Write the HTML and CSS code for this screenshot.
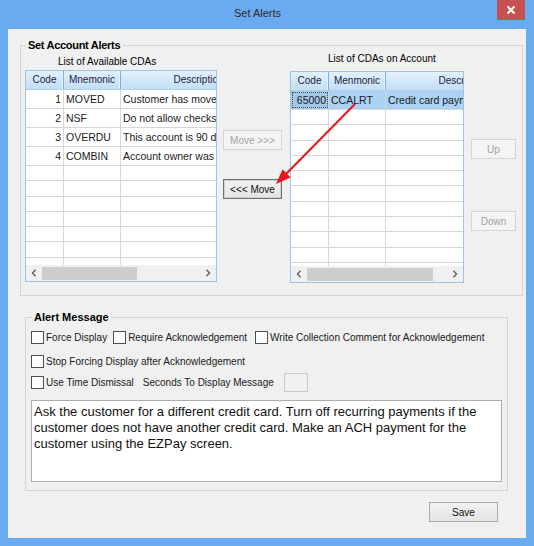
FILE: index.html
```html
<!DOCTYPE html>
<html>
<head>
<meta charset="utf-8">
<link rel="stylesheet" href="styles.css">
</head>
<body>
<div class="window">
  <div class="titlebar">
    <span class="title">Set Alerts</span>
    <span class="close"><svg width="10" height="10" viewBox="0 0 10 10"><path d="M1.5 1.5 L8.5 8.5 M8.5 1.5 L1.5 8.5" stroke="#fff" stroke-width="2" fill="none"/></svg></span>
  </div>
  <div class="client">
    <fieldset class="group group-accounts">
      <legend>Set Account Alerts</legend>
      <div class="accounts">
        <div class="list list-available">
          <div class="list-label">List of Available CDAs</div>
          <div class="grid">
            <div class="grid-head">
              <div class="hc c-code">Code</div><div class="hc c-mn">Mnemonic</div><div class="hc c-desc">Description</div>
            </div>
            <div class="grid-body">
              <div class="row"><div class="cell c-code num">1</div><div class="cell c-mn">MOVED</div><div class="cell c-desc">Customer has moved</div></div>
              <div class="row"><div class="cell c-code num">2</div><div class="cell c-mn">NSF</div><div class="cell c-desc">Do not allow checks</div></div>
              <div class="row"><div class="cell c-code num">3</div><div class="cell c-mn">OVERDU</div><div class="cell c-desc">This account is 90 days</div></div>
              <div class="row"><div class="cell c-code num">4</div><div class="cell c-mn">COMBIN</div><div class="cell c-desc">Account owner was</div></div>
              <div class="row filler"><div class="cell c-code"></div><div class="cell c-mn"></div><div class="cell c-desc"></div></div>
              <div class="row filler"><div class="cell c-code"></div><div class="cell c-mn"></div><div class="cell c-desc"></div></div>
              <div class="row filler"><div class="cell c-code"></div><div class="cell c-mn"></div><div class="cell c-desc"></div></div>
              <div class="row filler"><div class="cell c-code"></div><div class="cell c-mn"></div><div class="cell c-desc"></div></div>
              <div class="row filler"><div class="cell c-code"></div><div class="cell c-mn"></div><div class="cell c-desc"></div></div>
              <div class="row filler"><div class="cell c-code"></div><div class="cell c-mn"></div><div class="cell c-desc"></div></div>
              <div class="row filler"><div class="cell c-code"></div><div class="cell c-mn"></div><div class="cell c-desc"></div></div>
            </div>
            <div class="hscroll">
              <span class="arr"><svg width="6" height="8" viewBox="0 0 6 8"><path d="M4.5 0.8 L1.5 4 L4.5 7.2" stroke="#606060" stroke-width="1.4" fill="none"/></svg></span>
              <span class="track"><span class="thumb thumb-left"></span></span>
              <span class="arr"><svg width="6" height="8" viewBox="0 0 6 8"><path d="M1.5 0.8 L4.5 4 L1.5 7.2" stroke="#606060" stroke-width="1.4" fill="none"/></svg></span>
            </div>
          </div>
        </div>

        <div class="move-buttons">
          <div class="btn disabled btn-move-right">Move &gt;&gt;&gt;</div>
          <div class="btn default btn-move-left">&lt;&lt;&lt; Move</div>
        </div>

        <div class="list list-account">
          <div class="list-label">List of CDAs on Account</div>
          <div class="grid">
            <div class="grid-head">
              <div class="hc c-code">Code</div><div class="hc c-mn">Menmonic</div><div class="hc c-desc">Description</div>
            </div>
            <div class="grid-body">
              <div class="row selected"><div class="cell c-code num focus">65000</div><div class="cell c-mn">CCALRT</div><div class="cell c-desc">Credit card payment</div></div>
              <div class="row filler"><div class="cell c-code"></div><div class="cell c-mn"></div><div class="cell c-desc"></div></div>
              <div class="row filler"><div class="cell c-code"></div><div class="cell c-mn"></div><div class="cell c-desc"></div></div>
              <div class="row filler"><div class="cell c-code"></div><div class="cell c-mn"></div><div class="cell c-desc"></div></div>
              <div class="row filler"><div class="cell c-code"></div><div class="cell c-mn"></div><div class="cell c-desc"></div></div>
              <div class="row filler"><div class="cell c-code"></div><div class="cell c-mn"></div><div class="cell c-desc"></div></div>
              <div class="row filler"><div class="cell c-code"></div><div class="cell c-mn"></div><div class="cell c-desc"></div></div>
              <div class="row filler"><div class="cell c-code"></div><div class="cell c-mn"></div><div class="cell c-desc"></div></div>
              <div class="row filler"><div class="cell c-code"></div><div class="cell c-mn"></div><div class="cell c-desc"></div></div>
              <div class="row filler"><div class="cell c-code"></div><div class="cell c-mn"></div><div class="cell c-desc"></div></div>
              <div class="row filler"><div class="cell c-code"></div><div class="cell c-mn"></div><div class="cell c-desc"></div></div>
              <div class="row filler"><div class="cell c-code"></div><div class="cell c-mn"></div><div class="cell c-desc"></div></div>
            </div>
            <div class="hscroll">
              <span class="arr"><svg width="6" height="8" viewBox="0 0 6 8"><path d="M4.5 0.8 L1.5 4 L4.5 7.2" stroke="#606060" stroke-width="1.4" fill="none"/></svg></span>
              <span class="track"><span class="thumb thumb-right"></span></span>
              <span class="arr"><svg width="6" height="8" viewBox="0 0 6 8"><path d="M1.5 0.8 L4.5 4 L1.5 7.2" stroke="#606060" stroke-width="1.4" fill="none"/></svg></span>
            </div>
          </div>
        </div>

        <div class="order-buttons">
          <div class="btn disabled btn-up">Up</div>
          <div class="btn disabled btn-down">Down</div>
        </div>
      </div>
    </fieldset>

    <fieldset class="group group-message">
      <legend>Alert Message</legend>
      <div class="opt-row row1">
        <span class="check"><span class="box"></span>Force Display</span>
        <span class="check"><span class="box"></span>Require Acknowledgement</span>
        <span class="check"><span class="box"></span>Write Collection Comment for Acknowledgement</span>
      </div>
      <div class="opt-row row2">
        <span class="check"><span class="box"></span>Stop Forcing Display after Acknowledgement</span>
      </div>
      <div class="opt-row row3">
        <span class="check"><span class="box"></span>Use Time Dismissal</span>
        <span class="seconds-label">Seconds To Display Message</span>
        <span class="seconds-input"></span>
      </div>
      <div class="message">Ask the customer for a different credit card. Turn off recurring payments if the customer does not have another credit card. Make an ACH payment for the customer using the EZPay screen.</div>
    </fieldset>

    <div class="footer">
      <div class="btn btn-save">Save</div>
    </div>
  </div>

  <svg class="annotation" width="534" height="546" viewBox="0 0 534 546">
    <line x1="355" y1="104" x2="286" y2="174" stroke="#e8161b" stroke-width="2"/>
    <polygon points="276,184 290.6,177.4 282.6,169.2" fill="#e8161b"/>
  </svg>
</div>
</body>
</html>
```

FILE: styles.css
```css
* { box-sizing: border-box; }

body {
  margin: 0;
  background: #ffffff;
}

.window {
  position: relative;
  width: 534px;
  height: 546px;
  background: #6aaaf0;
  display: flex;
  flex-direction: column;
  font-family: "Liberation Sans", Arial, sans-serif;
  font-size: 10px;
  color: #000;
}

.titlebar {
  height: 29px;
  flex: none;
  display: flex;
  align-items: flex-start;
}

.title {
  flex: 1;
  text-align: center;
  padding-left: 18px;
  line-height: 27px;
  font-size: 11px;
  color: #2b2b2b;
}

.close {
  width: 28px;
  height: 20px;
  margin-right: 9px;
  background: #c75050;
  display: flex;
  align-items: center;
  justify-content: center;
}

.client {
  flex: 1;
  margin: 0 8px 8px;
  background: #f0f0f0;
  display: flex;
  flex-direction: column;
}

.group {
  min-width: 0;
  border: 1px solid #d5d5d5;
}

.group legend {
  font-weight: bold;
  font-size: 11px;
  line-height: 14px;
  padding: 0 2px;
  margin-left: 1px;
}

.group-accounts {
  margin: 9px 3px 0 12px;
  padding: 0 0 12px 4px;
}

.group-accounts legend { letter-spacing: -0.3px; }

.accounts {
  display: flex;
  align-items: flex-start;
}

.list-available { width: 192px; }
.list-account { width: 174px; margin-left: 8px; }

.list-label {
  line-height: 12px;
  white-space: nowrap;
}
.list-available .list-label { margin: 4px 0 2px 33px; }
.list-account .list-label { margin: 1px 0 6px 38px; }

.grid {
  height: 212px;
  border: 1px solid #9fc3e4;
  background: #fff;
  display: flex;
  flex-direction: column;
  overflow: hidden;
}

.grid-head {
  height: 19px;
  flex: none;
  display: flex;
  overflow: hidden;
  background: linear-gradient(#e3f1fc, #c2def6);
  border-bottom: 1px solid #b0d0ec;
}

.hc {
  flex: none;
  line-height: 18px;
  text-align: center;
  color: #1c1c44;
  white-space: nowrap;
  overflow: hidden;
  border-right: 1px solid #7fb0e0;
  box-shadow: inset -1px 0 0 #e6f2fc;
}

.c-code { width: 38px; }
.c-mn { width: 57px; }
.c-desc { width: 156px; }

.grid-body {
  flex: 1;
  overflow: hidden;
}

.row {
  display: flex;
  height: 19px;
  border-bottom: 1px solid #d7d7d7;
}

.row.filler { height: 15.3px; }

.cell {
  flex: none;
  border-right: 1px solid #d7d7d7;
  padding: 0 1px 0 2px;
  line-height: 18px;
  font-size: 10.5px;
  white-space: nowrap;
  overflow: hidden;
  color: #1a1a1a;
}

.cell.num {
  text-align: right;
  padding: 0 2px 0 0;
}

.row.selected { background: #abd2f4; }

.cell.focus {
  outline: 1px dotted #4a4a4a;
  outline-offset: -2px;
  background: #a2c9ea;
}

.hscroll {
  height: 16px;
  flex: none;
  display: flex;
  align-items: center;
  background: #f0f0f0;
}

.arr {
  width: 16px;
  height: 16px;
  flex: none;
  display: flex;
  align-items: center;
  justify-content: center;
}

.track {
  flex: 1;
  height: 16px;
  display: flex;
  align-items: center;
}

.thumb {
  height: 13px;
  background: #cdcdcd;
}
.thumb-left { width: 95px; }
.thumb-right { width: 126px; }

.btn {
  height: 20px;
  border: 1px solid #acacac;
  background: linear-gradient(#f2f2f2, #e4e4e4);
  display: flex;
  align-items: center;
  justify-content: center;
  white-space: nowrap;
  color: #111;
}

.btn.disabled {
  border-color: #d5d5d5;
  background: #f4f4f4;
  color: #a3a3a3;
}

.btn.default {
  border-color: #707070;
  box-shadow: inset 0 0 0 1px #d0d0d0;
}

.move-buttons {
  width: 59px;
  margin-left: 6px;
}
.btn-move-right { margin-top: 78px; }
.btn-move-left { margin-top: 29px; }

.order-buttons {
  width: 45px;
  margin-left: 7px;
}
.btn-up { margin-top: 87px; }
.btn-down { margin-top: 52px; }

.group-message {
  margin: 14px 18px 0 17px;
  padding: 0 0 8px 5px;
}

.opt-row {
  display: flex;
  align-items: center;
  white-space: nowrap;
  color: #1a1a1a;
}

.row1 { height: 14px; margin-top: 6px; gap: 6px; }
.row2 { height: 14px; margin-top: 10px; }
.row3 { height: 19px; margin-top: 5px; }

.check {
  display: flex;
  align-items: center;
}

.row1 .check:nth-child(3) { margin-left: 2px; }

.box {
  width: 13px;
  height: 13px;
  border: 1px solid #4f4f4f;
  background: #fcfcfc;
  margin-right: 2px;
  flex: none;
}

.seconds-label { margin-left: 9px; }

.seconds-input {
  width: 24px;
  height: 19px;
  margin-left: 10px;
  border: 1px solid #c8c8c8;
  background: #f0f0f0;
}

.message {
  width: 471px;
  height: 82px;
  margin-top: 8px;
  border: 1px solid #abadb3;
  background: #fff;
  padding: 3px 2px 0 2px;
  font-size: 13px;
  line-height: 16px;
  color: #111;
}

.footer {
  display: flex;
  justify-content: flex-end;
  margin: 11px 28px 0 0;
}

.btn-save {
  width: 69px;
  height: 20px;
}

.annotation {
  position: absolute;
  left: 0;
  top: 0;
  pointer-events: none;
}
```
